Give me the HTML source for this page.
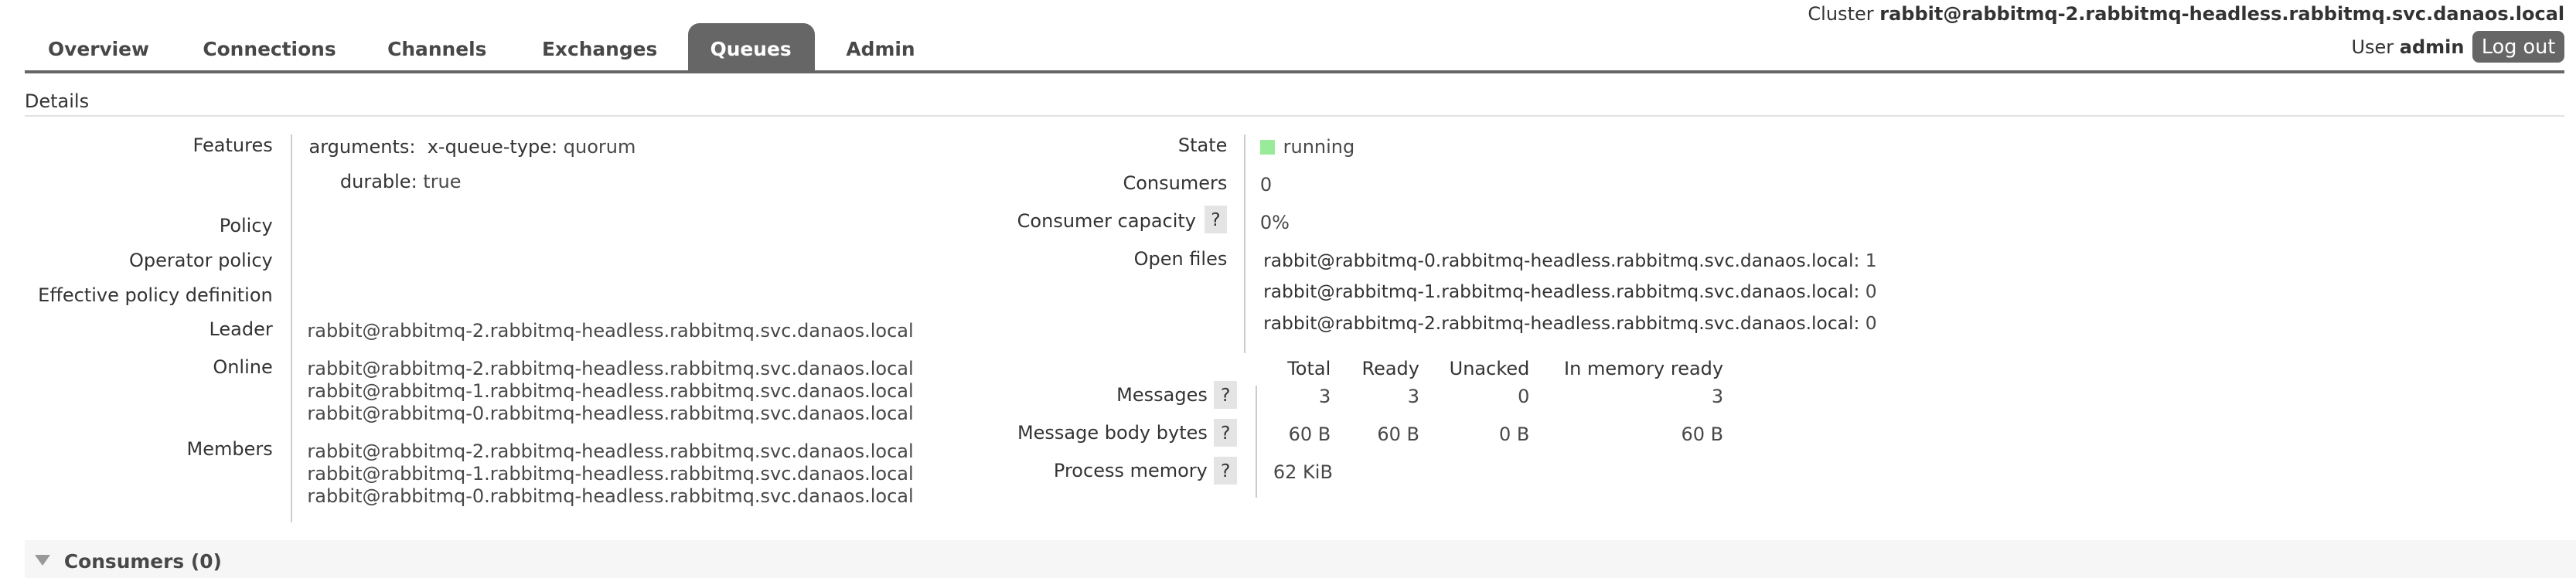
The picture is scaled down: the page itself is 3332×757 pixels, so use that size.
<!DOCTYPE html>
<html><head><meta charset="utf-8"><style>
html,body{margin:0;padding:0;background:#fff;}
body{width:1568px;height:356px;overflow:hidden;zoom:2.125;position:relative;font-family:"DejaVu Sans","Liberation Sans",sans-serif;font-size:11.3px;color:#333;}
.a{position:absolute;line-height:14px;white-space:nowrap;margin-top:1px;}
.r{text-align:right;}
.v{color:#484848;}
.b{font-weight:bold;}
.tab{position:absolute;top:22px;line-height:14px;font-weight:bold;font-size:11.7px;color:#484848;transform:translateX(-50%);margin-top:1px;}
.q{position:absolute;width:14px;height:17px;background:#e4e4e4;color:#333;text-align:center;line-height:17px;font-size:11px;}
.vl{position:absolute;width:1px;background:#ccc;}
.of{font-size:11px;}
</style></head><body>
<div class="a" style="right:7px;top:1px;">Cluster <b style="color:#333">rabbit@rabbitmq-2.rabbitmq-headless.rabbitmq.svc.danaos.local</b></div>
<div class="a" style="right:68px;top:21px;">User <b>admin</b></div>
<div style="position:absolute;left:1505px;top:19px;width:56px;height:19px;background:#666;border-radius:4px;color:#fff;text-align:center;line-height:20px;font-size:12px;">Log out</div>

<div style="position:absolute;left:419px;top:14px;width:77px;height:30px;background:#666;border-radius:7px 7px 0 0;"></div>
<div class="tab" style="left:60px;">Overview</div>
<div class="tab" style="left:164px;">Connections</div>
<div class="tab" style="left:266px;">Channels</div>
<div class="tab" style="left:365px;">Exchanges</div>
<div class="tab" style="left:457px;color:#fff;">Queues</div>
<div class="tab" style="left:536px;">Admin</div>
<div style="position:absolute;left:15px;top:43px;width:1546px;height:1.5px;background:#666;"></div>

<div class="a" style="left:15px;top:54px;">Details</div>
<div style="position:absolute;left:15px;top:70px;width:1546px;height:1px;background:#e2e2e2;"></div>

<div class="vl" style="left:177px;top:82px;height:236px;"></div>
<div class="a r" style="right:1402px;top:81px;">Features</div>
<div class="a" style="left:188px;top:82px;">arguments:&nbsp; x-queue-type: <span class="v">quorum</span></div>
<div class="a" style="left:207px;top:103px;">durable: <span class="v">true</span></div>
<div class="a r" style="right:1402px;top:130px;">Policy</div>
<div class="a r" style="right:1402px;top:151px;">Operator policy</div>
<div class="a r" style="right:1402px;top:172px;">Effective policy definition</div>
<div class="a r" style="right:1402px;top:193px;">Leader</div>
<div class="a v" style="left:187px;top:194px;">rabbit@rabbitmq-2.rabbitmq-headless.rabbitmq.svc.danaos.local</div>
<div class="a r" style="right:1402px;top:216px;">Online</div>
<div class="a v" style="left:187px;top:217px;line-height:13.7px;">rabbit@rabbitmq-2.rabbitmq-headless.rabbitmq.svc.danaos.local<br>rabbit@rabbitmq-1.rabbitmq-headless.rabbitmq.svc.danaos.local<br>rabbit@rabbitmq-0.rabbitmq-headless.rabbitmq.svc.danaos.local</div>
<div class="a r" style="right:1402px;top:266px;">Members</div>
<div class="a v" style="left:187px;top:267px;line-height:13.7px;">rabbit@rabbitmq-2.rabbitmq-headless.rabbitmq.svc.danaos.local<br>rabbit@rabbitmq-1.rabbitmq-headless.rabbitmq.svc.danaos.local<br>rabbit@rabbitmq-0.rabbitmq-headless.rabbitmq.svc.danaos.local</div>

<div class="vl" style="left:757px;top:82px;height:133px;"></div>
<div class="a r" style="right:821px;top:81px;">State</div>
<div style="position:absolute;left:767px;top:85px;width:9px;height:9px;background:#99eb99;"></div>
<div class="a v" style="left:781px;top:82px;">running</div>
<div class="a r" style="right:821px;top:104px;">Consumers</div>
<div class="a v" style="left:767px;top:105px;">0</div>
<div class="a r" style="right:840px;top:127px;">Consumer capacity</div>
<div class="q" style="left:733px;top:125px;">?</div>
<div class="a v" style="left:767px;top:128px;">0%</div>
<div class="a r" style="right:821px;top:150px;">Open files</div>
<div class="a of" style="left:769px;top:151px;">rabbit@rabbitmq-0.rabbitmq-headless.rabbitmq.svc.danaos.local: <span class="v">1</span></div>
<div class="a of" style="left:769px;top:170px;">rabbit@rabbitmq-1.rabbitmq-headless.rabbitmq.svc.danaos.local: <span class="v">0</span></div>
<div class="a of" style="left:769px;top:189px;">rabbit@rabbitmq-2.rabbitmq-headless.rabbitmq.svc.danaos.local: <span class="v">0</span></div>

<div class="a r" style="right:758px;top:217px;">Total</div>
<div class="a r" style="right:704px;top:217px;">Ready</div>
<div class="a r" style="right:637px;top:217px;">Unacked</div>
<div class="a r" style="right:519px;top:217px;">In memory ready</div>
<div class="vl" style="left:764px;top:235px;height:68px;"></div>
<div class="a r" style="right:833px;top:233px;">Messages</div>
<div class="q" style="left:739px;top:232px;">?</div>
<div class="a r v" style="right:758px;top:234px;">3</div>
<div class="a r v" style="right:704px;top:234px;">3</div>
<div class="a r v" style="right:637px;top:234px;">0</div>
<div class="a r v" style="right:519px;top:234px;">3</div>
<div class="a r" style="right:833px;top:256px;">Message body bytes</div>
<div class="q" style="left:739px;top:255px;">?</div>
<div class="a r v" style="right:758px;top:257px;">60 B</div>
<div class="a r v" style="right:704px;top:257px;">60 B</div>
<div class="a r v" style="right:637px;top:257px;">0 B</div>
<div class="a r v" style="right:519px;top:257px;">60 B</div>
<div class="a r" style="right:833px;top:279px;">Process memory</div>
<div class="q" style="left:739px;top:278px;">?</div>
<div class="a v" style="left:775px;top:280px;">62 KiB</div>

<div style="position:absolute;left:15px;top:329px;width:1553px;height:23px;background:#f6f6f6;"></div>
<div style="position:absolute;left:21px;top:338px;width:0;height:0;border-left:5px solid transparent;border-right:5px solid transparent;border-top:7px solid #999;"></div>
<div class="a b" style="left:39px;top:334px;font-size:11.7px;color:#484848;">Consumers (0)</div>
</body></html>
